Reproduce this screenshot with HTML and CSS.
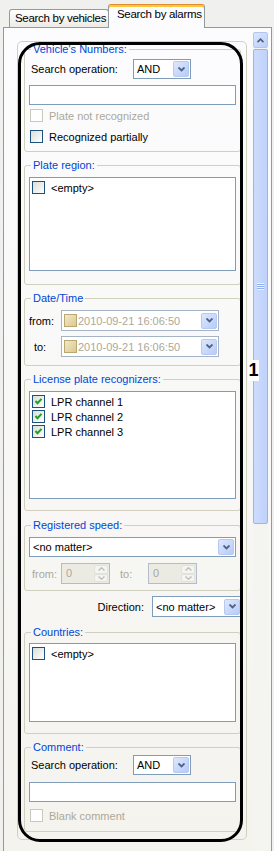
FILE: index.html
```html
<!DOCTYPE html>
<html>
<head>
<meta charset="utf-8">
<link rel="stylesheet" href="styles.css">
</head>
<body>
<div class="window">
  <div class="tabs">
    <div class="tab">Search by vehicles</div>
    <div class="tab active">Search by alarms</div>
  </div>

  <div class="page">
    <div class="view">
      <div class="frame">

        <fieldset class="g-numbers">
          <legend>Vehicle's Numbers:</legend>
          <div class="op-row">
            <span class="op-label">Search operation:</span>
            <div class="combo op"><span class="val">AND</span><span class="drop"><svg width="7" height="5" viewBox="0 0 7 5"><path d="M0.5 0.5 L3.5 3.5 L6.5 0.5" stroke="#4d6185" stroke-width="1.8" fill="none"/></svg></span></div>
          </div>
          <div class="edit"></div>
          <div class="check-row disabled"><i class="cb"></i>Plate not recognized</div>
          <div class="check-row"><i class="cb"></i>Recognized partially</div>
        </fieldset>

        <fieldset class="g-region">
          <legend>Plate region:</legend>
          <div class="listbox region-list">
            <div class="item"><i class="cb"></i>&lt;empty&gt;</div>
          </div>
        </fieldset>

        <fieldset class="g-date">
          <legend>Date/Time</legend>
          <div class="date-row">
            <span class="date-label">from:</span>
            <div class="picker"><i class="pcb"></i><span class="val">2010-09-21 16:06:50</span><span class="drop"><svg width="7" height="5" viewBox="0 0 7 5"><path d="M0.5 0.5 L3.5 3.5 L6.5 0.5" stroke="#4d6185" stroke-width="1.8" fill="none"/></svg></span></div>
          </div>
          <div class="date-row">
            <span class="date-label">to:</span>
            <div class="picker"><i class="pcb"></i><span class="val">2010-09-21 16:06:50</span><span class="drop"><svg width="7" height="5" viewBox="0 0 7 5"><path d="M0.5 0.5 L3.5 3.5 L6.5 0.5" stroke="#4d6185" stroke-width="1.8" fill="none"/></svg></span></div>
          </div>
        </fieldset>

        <fieldset class="g-lpr">
          <legend>License plate recognizers:</legend>
          <div class="listbox lpr-list">
            <div class="item"><i class="cb checked"><svg width="9" height="9" viewBox="0 0 9 9"><path d="M1.5 4 L3.5 6.2 L7.5 1.8" stroke="#21a121" stroke-width="2" fill="none"/></svg></i>LPR channel 1</div>
            <div class="item"><i class="cb checked"><svg width="9" height="9" viewBox="0 0 9 9"><path d="M1.5 4 L3.5 6.2 L7.5 1.8" stroke="#21a121" stroke-width="2" fill="none"/></svg></i>LPR channel 2</div>
            <div class="item"><i class="cb checked"><svg width="9" height="9" viewBox="0 0 9 9"><path d="M1.5 4 L3.5 6.2 L7.5 1.8" stroke="#21a121" stroke-width="2" fill="none"/></svg></i>LPR channel 3</div>
          </div>
        </fieldset>

        <fieldset class="g-speed">
          <legend>Registered speed:</legend>
          <div class="combo wide"><span class="val">&lt;no matter&gt;</span><span class="drop"><svg width="7" height="5" viewBox="0 0 7 5"><path d="M0.5 0.5 L3.5 3.5 L6.5 0.5" stroke="#4d6185" stroke-width="1.8" fill="none"/></svg></span></div>
          <div class="speed-row">
            <span class="speed-from">from:</span>
            <div class="spin"><span class="val">0</span><span class="spin-btns"><span class="sbtn"><svg width="7" height="4" viewBox="0 0 7 4"><path d="M0.5 3.5 L3.5 0.8 L6.5 3.5" stroke="#c2c2bd" stroke-width="1.5" fill="none"/></svg></span><span class="sbtn"><svg width="7" height="4" viewBox="0 0 7 4"><path d="M0.5 0.5 L3.5 3.2 L6.5 0.5" stroke="#c2c2bd" stroke-width="1.5" fill="none"/></svg></span></span></div>
            <span class="speed-to">to:</span>
            <div class="spin"><span class="val">0</span><span class="spin-btns"><span class="sbtn"><svg width="7" height="4" viewBox="0 0 7 4"><path d="M0.5 3.5 L3.5 0.8 L6.5 3.5" stroke="#c2c2bd" stroke-width="1.5" fill="none"/></svg></span><span class="sbtn"><svg width="7" height="4" viewBox="0 0 7 4"><path d="M0.5 0.5 L3.5 3.2 L6.5 0.5" stroke="#c2c2bd" stroke-width="1.5" fill="none"/></svg></span></span></div>
          </div>
        </fieldset>

        <div class="dir-row">
          <span class="dir-label">Direction:</span>
          <div class="combo dir"><span class="val">&lt;no matter&gt;</span><span class="drop"><svg width="7" height="5" viewBox="0 0 7 5"><path d="M0.5 0.5 L3.5 3.5 L6.5 0.5" stroke="#4d6185" stroke-width="1.8" fill="none"/></svg></span></div>
        </div>

        <fieldset class="g-countries">
          <legend>Countries:</legend>
          <div class="listbox countries-list">
            <div class="item"><i class="cb"></i>&lt;empty&gt;</div>
          </div>
        </fieldset>

        <fieldset class="g-comment">
          <legend>Comment:</legend>
          <div class="op-row">
            <span class="op-label">Search operation:</span>
            <div class="combo op"><span class="val">AND</span><span class="drop"><svg width="7" height="5" viewBox="0 0 7 5"><path d="M0.5 0.5 L3.5 3.5 L6.5 0.5" stroke="#4d6185" stroke-width="1.8" fill="none"/></svg></span></div>
          </div>
          <div class="edit"></div>
          <div class="check-row disabled blank"><i class="cb"></i>Blank comment</div>
        </fieldset>

      </div>
    </div>

    <div class="scrollbar">
      <div class="sb-up"><svg width="7" height="5" viewBox="0 0 7 5"><path d="M0.5 4.2 L3.5 1.2 L6.5 4.2" stroke="#4d6185" stroke-width="1.8" fill="none"/></svg></div>
      <div class="sb-thumb"><span class="grip"></span></div>
    </div>
  </div>

  <div class="callout"></div>
  <div class="callout-num">1</div>
</div>
</body>
</html>
```

FILE: styles.css
```css
* {
  box-sizing: border-box;
}

body {
  margin: 0;
  font-family: 'Liberation Sans', Arial, sans-serif;
  font-size: 11px;
  color: #000;
  background: #f0f0ee;
}

.window {
  position: relative;
  width: 274px;
  height: 851px;
  overflow: hidden;
}

/* tab strip */
.tabs {
  height: 27px;
  display: flex;
  align-items: flex-end;
  padding-left: 9px;
}

.tab {
  width: 100px;
  height: 18px;
  padding: 2px 0 0 5px;
  border: 1px solid #919b9c;
  border-bottom: none;
  border-radius: 3px 3px 0 0;
  background: linear-gradient(#ffffff, #ecebe6);
  font-size: 11.5px;
  letter-spacing: -0.3px;
  line-height: 13px;
  white-space: nowrap;
  overflow: hidden;
}

.tab.active {
  position: relative;
  z-index: 1;
  width: 97px;
  height: 24px;
  margin-left: -1px;
  margin-bottom: -1px;
  padding: 3px 0 0 8px;
  border-top: 1px solid #e68b2c;
  box-shadow: inset 0 2px #ffc83c;
  background: #fcfcfe;
}

/* tab page */
.page {
  display: flex;
  margin-left: 3px;
  width: 269px;
  height: 824px;
  border: 1px solid #919b9c;
  border-bottom: none;
  background: linear-gradient(#fcfcfe, #f4f3ee);
}

.view {
  width: 249px;
  padding: 13px 6px 0 13px;
}

.frame {
  border: 1px solid #d0d0bf;
  border-radius: 5px;
  padding: 0 5px 7px 6px;
}

fieldset {
  margin: 7px 0 0;
  padding: 0 4px;
  min-width: 0;
  border: 1px solid #d0d0bf;
  border-radius: 3px;
}

legend {
  margin-left: 2px;
  padding: 0 2px;
  line-height: 13px;
  color: #0046d5;
}

.g-numbers { margin-top: 1px; padding-bottom: 4px; }
.g-region { padding-bottom: 13px; }
.g-date { padding-bottom: 8px; }
.g-lpr { padding-bottom: 11px; }
.g-speed { margin-top: 8px; padding-bottom: 6px; }
.g-countries { margin-top: 9px; padding-bottom: 11px; }
.g-comment { margin-top: 7px; padding-bottom: 5px; }

/* common controls */
.combo {
  display: flex;
  align-items: center;
  height: 20px;
  border: 1px solid #7f9db9;
  background: #fff;
  padding-left: 3px;
}

.combo .val {
  flex: 1;
  white-space: nowrap;
}

.drop {
  display: flex;
  align-items: center;
  justify-content: center;
  width: 16px;
  height: 16px;
  margin-right: 1px;
  border: 1px solid #b7c9f3;
  border-radius: 2px;
  background: linear-gradient(135deg, #dde7fe, #b8cbf7);
}

.edit {
  height: 20px;
  border: 1px solid #7f9db9;
  background: #fff;
}

.cb {
  display: flex;
  align-items: center;
  justify-content: center;
  flex: none;
  width: 13px;
  height: 13px;
  border: 1px solid #1c5180;
  background: linear-gradient(135deg, #dcdcd7, #ffffff);
}

.check-row {
  display: flex;
  align-items: center;
  gap: 6px;
  height: 21px;
  padding-left: 1px;
}

.check-row.disabled {
  color: #aca899;
}

.check-row.disabled .cb {
  border-color: #cac8bb;
  background: #fff;
}

.listbox {
  border: 1px solid #7f9db9;
  background: #fff;
  padding: 2px 0 0 2px;
}

.item {
  display: flex;
  align-items: center;
  gap: 6px;
  height: 15px;
}

/* Vehicle's numbers / comment */
.op-row {
  display: flex;
  align-items: center;
  height: 20px;
  margin-top: 3px;
}

.op-label {
  width: 104px;
  padding-left: 2px;
}

.combo.op {
  width: 58px;
}

.op-row + .edit {
  margin-top: 6px;
}

.g-comment .op-row {
  margin-top: 1px;
}

.g-comment .op-row + .edit {
  margin-top: 7px;
}

.blank {
  margin-top: 3px;
}

.region-list {
  height: 94px;
  margin-top: 5px;
}

/* date / time */
.date-row {
  display: flex;
  align-items: center;
  height: 21px;
  margin-top: 5px;
}

.date-label {
  width: 22px;
  text-align: center;
  margin-right: 10px;
}

.picker {
  display: flex;
  align-items: center;
  width: 158px;
  height: 21px;
  padding-left: 2px;
  border: 1px solid #a5b3c6;
  background: #fff;
  color: #aca899;
}

.pcb {
  width: 13px;
  height: 13px;
  margin-right: 1px;
  border: 1px solid #b9a872;
  background: linear-gradient(135deg, #f3e9c8, #dcc890);
}

.picker .val {
  flex: 1;
  white-space: nowrap;
}

.lpr-list {
  height: 108px;
  margin-top: 5px;
}

/* speed */
.combo.wide {
  margin-top: 5px;
}

.speed-row {
  display: flex;
  align-items: center;
  height: 21px;
  margin-top: 6px;
  color: #aca899;
}

.speed-from {
  width: 32px;
  padding-left: 3px;
}

.speed-to {
  width: 38px;
  padding-left: 10px;
}

.spin {
  display: flex;
  width: 49px;
  height: 21px;
  padding: 1px 1px 1px 4px;
  border: 1px solid #b3bccb;
  background: #ebebe4;
  color: #aca899;
  line-height: 17px;
}

.spin .val {
  flex: 1;
}

.spin-btns {
  display: flex;
  flex-direction: column;
  width: 14px;
}

.sbtn {
  display: flex;
  align-items: center;
  justify-content: center;
  flex: 1;
  border: 1px solid #e2e2dc;
  border-radius: 2px;
  background: #f4f4f0;
}

/* direction */
.dir-row {
  display: flex;
  align-items: center;
  justify-content: flex-end;
  height: 21px;
  margin: 5px -1px 0 0;
}

.dir-label {
  margin-right: 8px;
}

.combo.dir {
  width: 90px;
  height: 21px;
}

.countries-list {
  height: 79px;
  margin-top: 4px;
}

/* scrollbar */
.scrollbar {
  width: 15px;
  margin-top: 4px;
  background: #f4f4f0;
}

.sb-up {
  display: flex;
  align-items: center;
  justify-content: center;
  height: 16px;
  border: 1px solid #b3c6f2;
  border-radius: 2px;
  background: linear-gradient(135deg, #dbe6fe, #bccff9);
}

.sb-thumb {
  display: flex;
  align-items: center;
  justify-content: center;
  height: 475px;
  margin-top: 1px;
  border: 1px solid #9db4ea;
  border-radius: 2px;
  background: linear-gradient(90deg, #cddbfd, #c0d2fb);
}

.grip {
  width: 7px;
  height: 7px;
  background: repeating-linear-gradient(#eef4fe 0 1px, #8cb0f8 1px 2px);
}

/* annotation overlay */
.callout {
  position: absolute;
  left: 18px;
  top: 42px;
  width: 225px;
  height: 800px;
  border: 3px solid #000;
  border-radius: 22px;
}

.callout-num {
  position: absolute;
  left: 248px;
  top: 360px;
  width: 11px;
  background: #fff;
  font-weight: bold;
  font-size: 18px;
  line-height: 21px;
  text-align: center;
}
```
